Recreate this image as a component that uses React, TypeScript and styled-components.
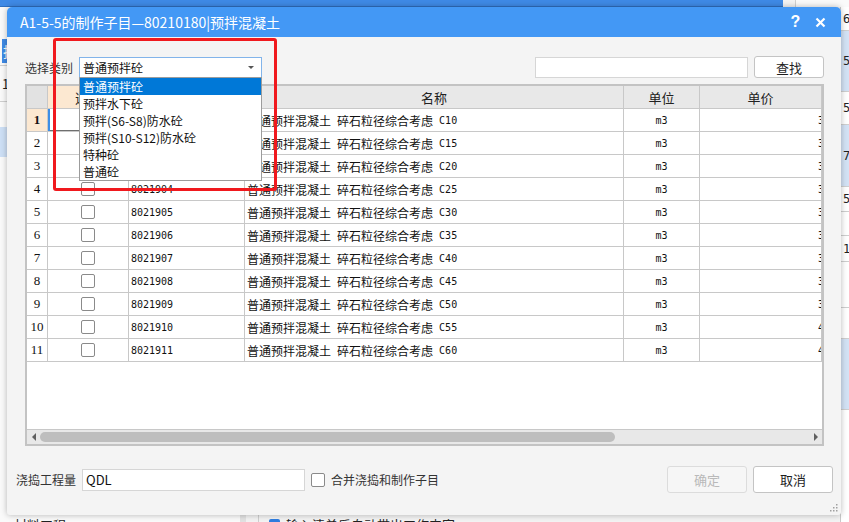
import React from 'react';
import styled, { createGlobalStyle } from 'styled-components';

const GlobalStyle = createGlobalStyle`
  html, body {
    margin: 0;
    padding: 0;
    background: #ffffff;
  }
  body {
    font-family: "Noto Sans CJK SC", "Microsoft YaHei", sans-serif;
    font-size: 12px;
    color: #222;
    overflow: hidden;
  }
`;

type RowData = {
  no: number;
  code: string;
  grade: string;
  price: string;
};

const rows: RowData[] = Array.from({ length: 11 }, (_, i) => ({
  no: i + 1,
  code: `80219${String(i + 1).padStart(2, '0')}`,
  grade: `C${10 + i * 5}`,
  price: i < 9 ? '356.31' : '402.18',
}));

const categories = [
  '普通预拌砼',
  '预拌水下砼',
  '预拌(S6-S8)防水砼',
  '预拌(S10-S12)防水砼',
  '特种砼',
  '普通砼',
];

const rightNumbers = [
  { h: 23, text: '6', tint: false },
  { h: 60, text: '5', tint: true },
  { h: 32, text: '5', tint: false },
  { h: 61, text: '7', tint: true },
  { h: 24, text: '5', tint: false },
  { h: 23, text: '', tint: false },
  { h: 25, text: '1', tint: false },
  { h: 45, text: '', tint: false },
  { h: 30, text: '', tint: false },
  { h: 70, text: '', tint: true },
];

/* ---------- background application (only edges show) ---------- */

const Desktop = styled.div`
  position: relative;
  width: 849px;
  height: 522px;
  overflow: hidden;
  background: #f3f3f3;
`;

const Shell = styled.div`
  display: flex;
  flex-direction: column;
  height: 100%;
`;

const ShellTop = styled.div`
  display: flex;
  height: 7px;
`;

const ShellTopBlue = styled.div`
  width: 783px;
  background: #3f8ae6;
  border-bottom: 1px solid #2f6fc0;
`;

const ShellTopRest = styled.div`
  flex: 1;
  background: #fafafa;
  border-left: 1px solid #d0d0d0;
  margin-left: 12px;
`;

const ShellMain = styled.div`
  display: flex;
  flex: 1;
`;

const LeftPane = styled.div`
  width: 240px;
  display: flex;
  flex-direction: column;
  background: #fafafa;
  border-right: 6px solid #e2e2e2;
`;

const PaneRow = styled.div<{ $h: number; $tint?: boolean; $line?: boolean }>`
  height: ${(p) => p.$h}px;
  flex-shrink: 0;
  display: flex;
  align-items: center;
  padding-left: 2px;
  font-size: 13px;
  color: #222;
  background: ${(p) => (p.$tint ? '#cddff5' : 'transparent')};
  border-bottom: ${(p) => (p.$line ? '1px solid #cfcfcf' : 'none')};
`;

const BlueTab = styled.div`
  height: 24px;
  padding: 0 6px 0 1px;
  background: #3f8ae6;
  color: #fff;
  font-size: 14px;
  line-height: 24px;
`;

const PaneFill = styled.div`
  flex: 1;
`;

const CutLine = styled.div<{ $indent: number }>`
  height: 7px;
  overflow: hidden;
  display: flex;
  align-items: flex-start;
  gap: 6px;
  padding: 1px 0 0 ${(p) => p.$indent}px;
  font-size: 13px;
  line-height: 20px;
`;

const CenterPane = styled.div`
  flex: 1;
  display: flex;
  flex-direction: column;
  border-left: 1px solid #cfcfcf;
  margin-left: 12px;
`;

const MiniCheck = styled.span`
  display: inline-block;
  width: 11px;
  height: 11px;
  margin-top: 4px;
  border-radius: 2px;
  background: #2f7de0;
`;

const RightPane = styled.div`
  width: 8px;
  display: flex;
  flex-direction: column;
  background: #fff;
  border-left: 1px solid #c9c9c9;
`;

const RightCell = styled.div<{ $h: number; $tint: boolean }>`
  height: ${(p) => p.$h}px;
  flex-shrink: 0;
  display: flex;
  align-items: center;
  padding-left: 2px;
  font-size: 12px;
  font-family: "DejaVu Sans Mono", monospace;
  background: ${(p) => (p.$tint ? '#d3e2f5' : '#ffffff')};
  border-bottom: 1px solid #cfcfcf;
`;

/* ---------- dialog ---------- */

const Dialog = styled.div`
  position: absolute;
  left: 7px;
  top: 7px;
  width: 834px;
  height: 508px;
  display: flex;
  flex-direction: column;
  background: #f4f4f4;
  border-radius: 5px 5px 3px 3px;
  box-shadow: 0 0 6px rgba(0, 0, 0, 0.28);
  overflow: hidden;
`;

const TitleBar = styled.div`
  height: 30px;
  flex-shrink: 0;
  display: flex;
  align-items: center;
  padding: 0 8px 0 13px;
  background: #4398f5;
  color: #fff;
  font-size: 14px;
`;

const TitleText = styled.div`
  flex: 1;
  white-space: nowrap;
`;

const TitleButton = styled.button`
  width: 25px;
  height: 22px;
  padding: 0;
  border: none;
  background: transparent;
  color: #fff;
  font-family: "Liberation Sans", sans-serif;
  font-weight: bold;
  font-size: 16px;
  display: flex;
  align-items: center;
  justify-content: center;
`;

const Body = styled.div`
  flex: 1;
  display: flex;
  flex-direction: column;
`;

const FilterRow = styled.div`
  height: 22px;
  margin-top: 19px;
  padding: 0 17px 0 18px;
  display: flex;
  align-items: center;
  gap: 6px;
`;

const Label = styled.span`
  font-size: 12px;
  color: #333;
  white-space: nowrap;
`;

const SelectWrap = styled.div`
  position: relative;
  width: 183px;
  height: 21px;
`;

const SelectBox = styled.div`
  box-sizing: border-box;
  height: 21px;
  display: flex;
  align-items: center;
  padding: 0 7px 0 3px;
  background: #fff;
  border: 1px solid #82b4ea;
  font-size: 12px;
  color: #111;
`;

const SelectValue = styled.span`
  flex: 1;
`;

const Caret = styled.span`
  width: 0;
  height: 0;
  border-left: 3px solid transparent;
  border-right: 3px solid transparent;
  border-top: 3px solid #555;
`;

const DropList = styled.ul`
  position: absolute;
  left: 0;
  top: 20px;
  width: 183px;
  box-sizing: border-box;
  margin: 0;
  padding: 0;
  list-style: none;
  background: #fff;
  border: 1px solid #9c9c9c;
  z-index: 3;
`;

const DropItem = styled.li<{ $active: boolean }>`
  height: 17px;
  line-height: 17px;
  padding-left: 3px;
  font-size: 12px;
  color: ${(p) => (p.$active ? '#fff' : '#111')};
  background: ${(p) => (p.$active ? '#0078d7' : 'transparent')};
  white-space: nowrap;
`;

const Spacer = styled.div`
  flex: 1;
`;

const TextInput = styled.div<{ $w: number; $h: number }>`
  box-sizing: border-box;
  width: ${(p) => p.$w}px;
  height: ${(p) => p.$h}px;
  display: flex;
  align-items: center;
  padding-left: 3px;
  background: #fff;
  border: 1px solid #d6d6d6;
  font-size: 13px;
  color: #111;
`;

const Button = styled.button<{ $w: number; $h: number; $disabled?: boolean }>`
  box-sizing: border-box;
  width: ${(p) => p.$w}px;
  height: ${(p) => p.$h}px;
  padding: 0;
  border-radius: 3px;
  border: 1px solid ${(p) => (p.$disabled ? '#dcdcdc' : '#c4c4c4')};
  background: ${(p) => (p.$disabled ? '#f6f6f6' : '#ffffff')};
  color: ${(p) => (p.$disabled ? '#b9b9b9' : '#1e1e1e')};
  font-family: "Noto Sans CJK SC", sans-serif;
  font-size: 13px;
`;

/* ---------- grid ---------- */

const Table = styled.div`
  height: 362px;
  box-sizing: border-box;
  margin: 6px 17px 0 18px;
  display: flex;
  flex-direction: column;
  background: #fff;
  border: 2px solid #c3c3c3;
  overflow: hidden;
`;

const GridRow = styled.div`
  display: grid;
  grid-template-columns: 21px 81px 116px 379px 76px 1fr;
  height: 23px;
  flex-shrink: 0;
`;

const Cell = styled.div<{
  $align?: 'left' | 'center' | 'right';
  $bg?: string;
}>`
  box-sizing: border-box;
  display: flex;
  align-items: center;
  justify-content: ${(p) =>
    p.$align === 'center' ? 'center' : p.$align === 'right' ? 'flex-end' : 'flex-start'};
  padding-left: ${(p) => (p.$align === 'left' ? '2px' : '0')};
  border-right: 1px solid #c8c8c8;
  border-bottom: 1px solid #c8c8c8;
  background: ${(p) => p.$bg || 'transparent'};
  white-space: nowrap;
  overflow: hidden;
  font-size: 12px;
  color: #111;
`;

const HeadCell = styled(Cell)`
  font-size: 13px;
  color: #222;
  background: ${(p) => p.$bg || '#e8e8e8'};
`;

const NumCell = styled(Cell)<{ $current?: boolean }>`
  font-family: "Liberation Serif", serif;
  font-size: 13px;
  font-weight: ${(p) => (p.$current ? 'bold' : 'normal')};
`;

const FocusCell = styled(Cell)`
  box-shadow: inset 2px 0 0 #3d8ee6, inset 0 -1px 0 #6f6f6f;
`;

const MonoText = styled.span`
  font-family: "DejaVu Sans Mono", "Noto Sans CJK SC", monospace;
  font-size: 10px;
  white-space: pre;
`;

const PriceText = styled.span`
  font-family: "DejaVu Sans Mono", monospace;
  font-size: 10px;
  transform: translateX(calc(100% - 3px));
`;

const CheckBox = styled.span<{ $size?: number }>`
  box-sizing: border-box;
  display: inline-block;
  width: ${(p) => p.$size || 14}px;
  height: ${(p) => p.$size || 14}px;
  border: 1px solid #8a8a8a;
  border-radius: 2px;
  background: #fff;
`;

const EmptyArea = styled.div`
  flex: 1;
  background: #fff;
`;

const HScroll = styled.div`
  height: 14px;
  flex-shrink: 0;
  display: flex;
  align-items: center;
  background: #e8e8e8;
  border-top: 1px solid #c8c8c8;
`;

const ArrowBox = styled.div`
  width: 13px;
  height: 100%;
  display: flex;
  align-items: center;
  justify-content: center;
`;

const Arrow = styled.span<{ $dir: 'left' | 'right' }>`
  width: 0;
  height: 0;
  border-top: 4px solid transparent;
  border-bottom: 4px solid transparent;
  ${(p) =>
    p.$dir === 'left' ? 'border-right: 4px solid #606060;' : 'border-left: 4px solid #606060;'}
`;

const Track = styled.div`
  flex: 1;
  height: 100%;
  display: flex;
  align-items: center;
`;

const Thumb = styled.div`
  width: 575px;
  height: 10px;
  border-radius: 5px;
  background: #bebebe;
`;

/* ---------- bottom ---------- */

const BottomRow = styled.div`
  height: 27px;
  margin-top: 20px;
  padding: 0 8px 0 9px;
  display: flex;
  align-items: center;
  gap: 6px;
`;

const ButtonGroup = styled.div`
  display: flex;
  gap: 6px;
`;

const Highlight = styled.div`
  position: absolute;
  left: 46px;
  top: 31px;
  width: 224px;
  height: 153px;
  box-sizing: border-box;
  border: 3px solid #f0191e;
  border-radius: 3px;
  pointer-events: none;
  z-index: 4;
`;

const Grip = styled.svg`
  position: absolute;
  right: 3px;
  bottom: 3px;
`;

const CloseIcon = () => (
  <svg width="11" height="11" viewBox="0 0 11 11">
    <path d="M1.5 1.5 L9.5 9.5 M9.5 1.5 L1.5 9.5" stroke="#fff" strokeWidth="2.2" />
  </svg>
);

const App: React.FC = () => {
  return (
    <>
      <GlobalStyle />
      <Desktop>
        <Shell>
          <ShellTop>
            <ShellTopBlue />
            <ShellTopRest />
          </ShellTop>
          <ShellMain>
            <LeftPane>
              <PaneRow $h={30} />
              <PaneRow $h={28} $line>
                <BlueTab>措</BlueTab>
              </PaneRow>
              <PaneRow $h={35} $line>
                18
              </PaneRow>
              <PaneRow $h={25} />
              <PaneRow $h={30} $tint />
              <PaneFill />
              <CutLine $indent={14}>
                <span>材料工程</span>
              </CutLine>
            </LeftPane>
            <CenterPane>
              <PaneFill />
              <CutLine $indent={10}>
                <MiniCheck />
                <span>输入清单后自动带出工作内容</span>
              </CutLine>
            </CenterPane>
            <RightPane>
              {rightNumbers.map((r, i) => (
                <RightCell key={i} $h={r.h} $tint={r.tint}>
                  {r.text}
                </RightCell>
              ))}
              <PaneFill />
            </RightPane>
          </ShellMain>
        </Shell>

        <Dialog>
          <TitleBar>
            <TitleText>A1-5-5的制作子目—80210180|预拌混凝土</TitleText>
            <TitleButton>?</TitleButton>
            <TitleButton>
              <CloseIcon />
            </TitleButton>
          </TitleBar>

          <Body>
            <FilterRow>
              <Label>选择类别</Label>
              <SelectWrap>
                <SelectBox>
                  <SelectValue>普通预拌砼</SelectValue>
                  <Caret />
                </SelectBox>
                <DropList>
                  {categories.map((c, i) => (
                    <DropItem key={c} $active={i === 0}>
                      {c}
                    </DropItem>
                  ))}
                </DropList>
              </SelectWrap>
              <Spacer />
              <TextInput $w={213} $h={21} />
              <Button $w={70} $h={22}>
                查找
              </Button>
            </FilterRow>

            <Table>
              <GridRow>
                <HeadCell $align="center" $bg="#e2e2e2" />
                <HeadCell $align="center" $bg="#fce8d1">
                  选择
                </HeadCell>
                <HeadCell $align="center">编码</HeadCell>
                <HeadCell $align="center">名称</HeadCell>
                <HeadCell $align="center">单位</HeadCell>
                <HeadCell $align="center">单价</HeadCell>
              </GridRow>
              {rows.map((r) => {
                const current = r.no === 1;
                const CheckCell = current ? FocusCell : Cell;
                return (
                  <GridRow key={r.no}>
                    <NumCell $align="center" $current={current} $bg={current ? '#fce8d1' : '#fff'}>
                      {r.no}
                    </NumCell>
                    <CheckCell $align="center">
                      <CheckBox />
                    </CheckCell>
                    <Cell $align="left">
                      <MonoText>{r.code}</MonoText>
                    </Cell>
                    <Cell $align="left">
                      普通预拌混凝土<MonoText> </MonoText>碎石粒径综合考虑
                      <MonoText> {r.grade}</MonoText>
                    </Cell>
                    <Cell $align="center">
                      <MonoText>m3</MonoText>
                    </Cell>
                    <Cell $align="right">
                      <PriceText>{r.price}</PriceText>
                    </Cell>
                  </GridRow>
                );
              })}
              <EmptyArea />
              <HScroll>
                <ArrowBox>
                  <Arrow $dir="left" />
                </ArrowBox>
                <Track>
                  <Thumb />
                </Track>
                <ArrowBox>
                  <Arrow $dir="right" />
                </ArrowBox>
              </HScroll>
            </Table>

            <BottomRow>
              <Label>浇捣工程量</Label>
              <TextInput $w={223} $h={22}>
                QDL
              </TextInput>
              <CheckBox />
              <Label>合并浇捣和制作子目</Label>
              <Spacer />
              <ButtonGroup>
                <Button $w={80} $h={27} $disabled>
                  确定
                </Button>
                <Button $w={80} $h={27}>
                  取消
                </Button>
              </ButtonGroup>
            </BottomRow>
          </Body>

          <Highlight />
          <Grip width="9" height="9" viewBox="0 0 9 9">
            {[
              [7, 1],
              [4, 4],
              [7, 4],
              [1, 7],
              [4, 7],
              [7, 7],
            ].map(([x, y]) => (
              <rect key={`${x}-${y}`} x={x} y={y} width="1.5" height="1.5" fill="#a0a0a0" />
            ))}
          </Grip>
        </Dialog>
      </Desktop>
    </>
  );
};

export default App;
